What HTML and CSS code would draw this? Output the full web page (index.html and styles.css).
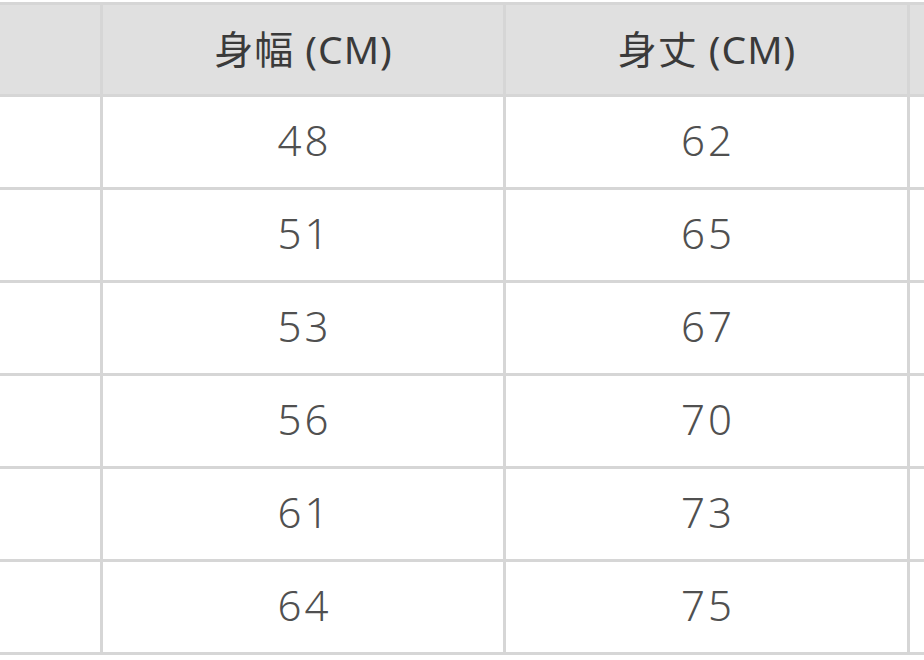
FILE: index.html
```html
<!DOCTYPE html>
<html lang="ja">
<head>
<meta charset="utf-8">
<title>サイズ表</title>
<link rel="stylesheet" href="styles.css">
</head>
<body>
<table class="size-table">
  <colgroup>
    <col class="c-label">
    <col class="c-width">
    <col class="c-length">
    <col class="c-rest">
  </colgroup>
  <thead>
    <tr>
      <th></th>
      <th>身幅 (CM)</th>
      <th>身丈 (CM)</th>
      <th class="last"></th>
    </tr>
  </thead>
  <tbody>
    <tr><td></td><td>48</td><td>62</td><td class="last"></td></tr>
    <tr><td></td><td>51</td><td>65</td><td class="last"></td></tr>
    <tr><td></td><td>53</td><td>67</td><td class="last"></td></tr>
    <tr><td></td><td>56</td><td>70</td><td class="last"></td></tr>
    <tr><td></td><td>61</td><td>73</td><td class="last"></td></tr>
    <tr><td></td><td>64</td><td>75</td><td class="last"></td></tr>
  </tbody>
</table>
</body>
</html>
```

FILE: styles.css
```css
html, body {
  margin: 0;
  padding: 0;
  background: #ffffff;
  overflow: hidden;
}

.size-table {
  margin-top: 2px;
  width: 924px;
  table-layout: fixed;
  border-collapse: separate;
  border-spacing: 0;
  border-top: 3px solid #d6d6d6;
  font-family: "Noto Sans", "Noto Sans CJK JP", sans-serif;
}

.c-label { width: 103px; }
.c-width { width: 403px; }
.c-length { width: 404px; }

.size-table th,
.size-table td {
  box-sizing: border-box;
  padding: 0;
  text-align: center;
  vertical-align: middle;
  border-right: 3px solid #d6d6d6;
  border-bottom: 3px solid #d6d6d6;
}

.size-table .last {
  border-right: none;
}

.size-table th {
  height: 92px;
  padding-bottom: 6px;
  padding-left: 1px;
  background: #e0e0e0;
  color: #3a3a3a;
  font-size: 39px;
  font-weight: 400;
  letter-spacing: 1px;
}

.size-table td {
  height: 93px;
  padding-bottom: 5px;
  padding-left: 3px;
  color: #505050;
  font-size: 42px;
  font-weight: 300;
  letter-spacing: 3px;
}
```
